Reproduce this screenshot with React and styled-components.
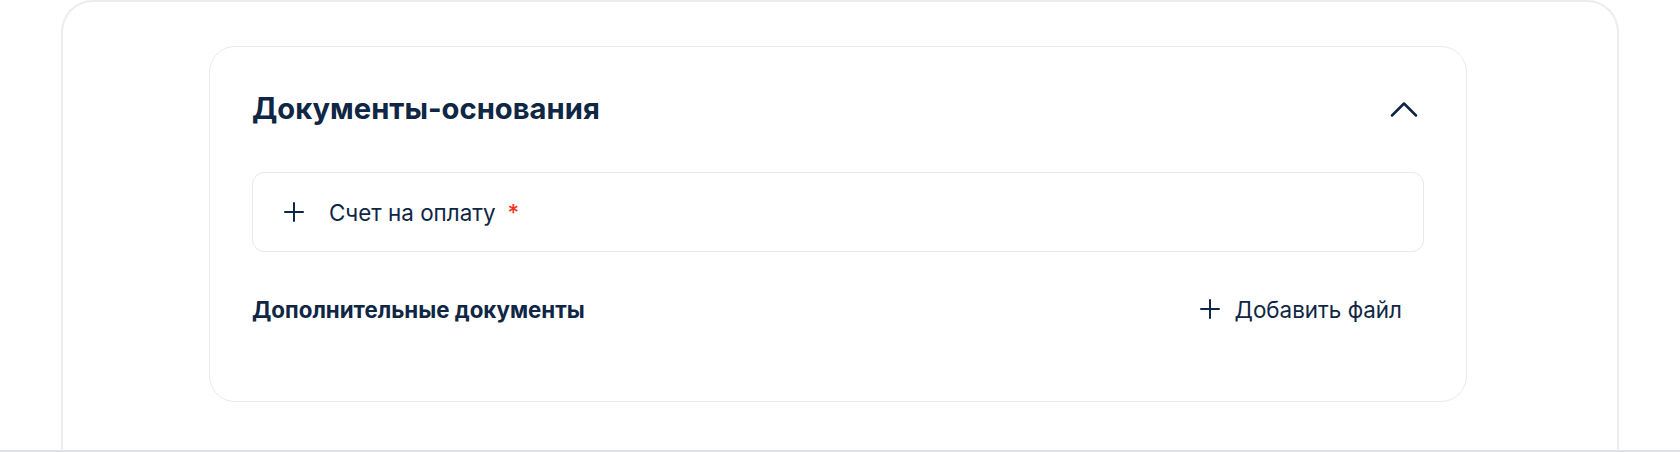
import React from 'react';
import styled, { createGlobalStyle } from 'styled-components';

const GlobalStyle = createGlobalStyle`
  html, body {
    margin: 0;
    padding: 0;
    background: #ffffff;
    overflow: hidden;
  }
  body {
    font-family: Inter, "Noto Sans", "Liberation Sans", sans-serif;
    color: #0f2644;
  }
`

const Page = styled.div`
  display: flex;
  flex-direction: column;
  height: 452px;
`

const Outer = styled.div`
  height: 450px;
  box-sizing: border-box;
  margin: 0 61px;
  border: 2px solid #ececec;
  border-bottom: none;
  border-radius: 32px 32px 0 0;
  padding: 44px 4px 0 0;
  display: flex;
  justify-content: center;
  align-items: flex-start;
`

const Footer = styled.div`
  height: 2px;
  background: #e0e0e8;
`

const Card = styled.section`
  width: 1258px;
  box-sizing: border-box;
  border: 1px solid #e9eaf0;
  border-radius: 26px;
  padding: 38px 42px 68px;
  background: #ffffff;
  display: flex;
  flex-direction: column;
`

const Header = styled.div`
  height: 48px;
  display: flex;
  align-items: center;
  justify-content: space-between;
`

const Title = styled.h2`
  margin: 0;
  font-size: 29.2px;
  line-height: 36px;
  font-weight: 700;
  color: #0f2644;
`

const IconButton = styled.button`
  width: 40px;
  height: 40px;
  padding: 0;
  border: none;
  background: none;
  display: flex;
  align-items: center;
  justify-content: center;
  cursor: pointer;
  color: #0f2644;
`

const DocRow = styled.div`
  margin-top: 39px;
  height: 80px;
  box-sizing: border-box;
  border: 1px solid #e7e8f1;
  border-radius: 12px;
  background: #ffffff;
  padding-left: 31px;
  display: flex;
  align-items: center;
  gap: 25px;
`

const DocLabel = styled.span`
  font-size: 22.4px;
  font-weight: 400;
  color: #0f2644;
`

const Required = styled.span`
  color: #f2321e;
  margin-left: 12px;
  font-weight: 500;
`

const Extra = styled.div`
  margin-top: 33px;
  height: 48px;
  display: flex;
  align-items: center;
  justify-content: space-between;
`

const Subtitle = styled.h3`
  margin: 0;
  font-size: 22.3px;
  font-weight: 700;
  color: #0f2644;
`

const AddButton = styled.button`
  height: 48px;
  padding: 0 22px 0 0;
  border: none;
  background: none;
  display: flex;
  align-items: center;
  gap: 15px;
  font-family: inherit;
  font-size: 22.4px;
  font-weight: 400;
  color: #0f2644;
  cursor: pointer;
`

const Plus = () => (
  <svg width="20" height="20" viewBox="0 0 20 20" fill="none">
    <path d="M10 1v18M1 10h18" stroke="#0f2644" strokeWidth="2" strokeLinecap="round" />
  </svg>
)

const ChevronUp = () => (
  <svg width="28" height="16" viewBox="0 0 28 16" fill="none">
    <path d="M2 14.5L14 2.5l12 12" stroke="#0f2644" strokeWidth="2.5" strokeLinecap="round" strokeLinejoin="round" />
  </svg>
)

export default function App() {
  return (
    <Page>
      <GlobalStyle />
      <Outer>
        <Card>
          <Header>
            <Title>Документы-основания</Title>
            <IconButton aria-label="Свернуть">
              <ChevronUp />
            </IconButton>
          </Header>
          <DocRow>
            <Plus />
            <DocLabel>
              Счет на оплату<Required>*</Required>
            </DocLabel>
          </DocRow>
          <Extra>
            <Subtitle>Дополнительные документы</Subtitle>
            <AddButton>
              <Plus />
              Добавить файл
            </AddButton>
          </Extra>
        </Card>
      </Outer>
      <Footer />
    </Page>
  )
}
